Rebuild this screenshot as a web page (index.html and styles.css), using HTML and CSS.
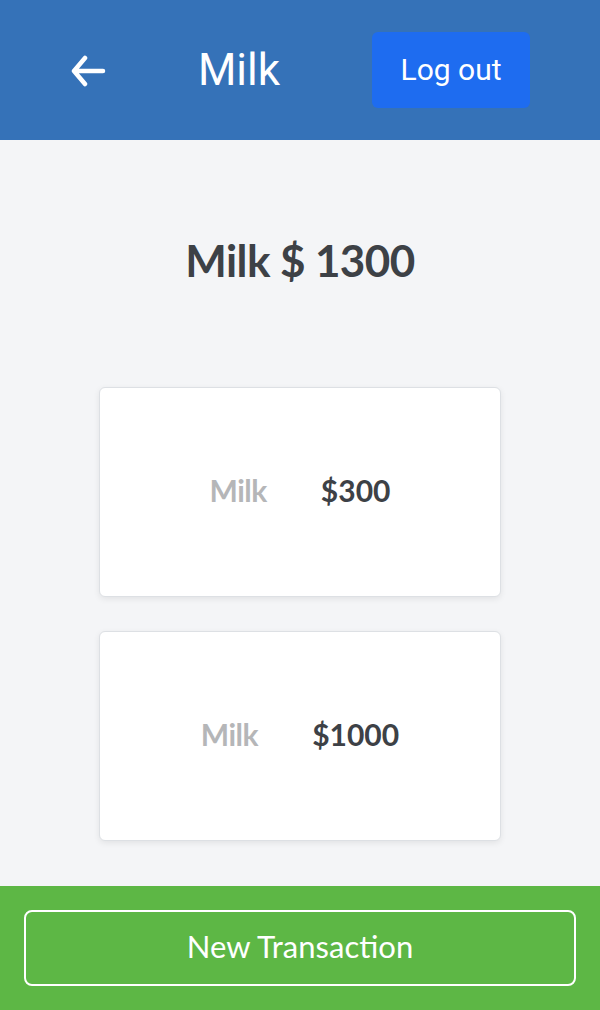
FILE: index.html
```html
<!DOCTYPE html>
<html>
<head>
<meta charset="utf-8">
<link rel="stylesheet" href="styles.css">
</head>
<body>
<div class="app">
  <header class="topbar">
    <button class="back" aria-label="Back">
      <svg width="36" height="32" viewBox="0 0 36 32"><path d="M33 16H4M15 3L4 16l11 13" fill="none" stroke="#fff" stroke-width="4.5" stroke-linecap="round" stroke-linejoin="round"/></svg>
    </button>
    <h1 class="title">Milk</h1>
    <button class="logout">Log out</button>
  </header>
  <main class="content">
    <h2 class="total">Milk $ 1300</h2>
    <div class="list">
      <div class="card"><span class="name">Milk</span><span class="amount">$300</span></div>
      <div class="card"><span class="name">Milk</span><span class="amount">$1000</span></div>
    </div>
  </main>
  <footer class="footer">
    <button class="new">New Transaction</button>
  </footer>
</div>
</body>
</html>
```
FILE: styles.css
```css
html, body { margin: 0; padding: 0; }
body { font-family: Lato, "Open Sans", sans-serif; background: #f4f5f7; }
.app { display: flex; flex-direction: column; height: 1010px; overflow: hidden; }
.topbar {
  height: 140px; flex: none; background: #3572b8;
  display: flex; align-items: center; justify-content: space-between;
  padding: 0 70px; box-sizing: border-box;
}
.back { background: none; border: 0; padding: 0; width: 36px; height: 32px; display: flex; margin-top: 2px; }
.title { margin: 0; font-family: Roboto, sans-serif; font-weight: 400; font-size: 44px; color: #fff; }
.logout {
  font-family: Roboto, sans-serif; font-size: 30px; color: #fff;
  background: #1e6cf0; border: 0; border-radius: 6px;
  width: 158px; height: 76px; padding: 0 0 2px;
}
.content { flex: 1; min-height: 0; display: flex; flex-direction: column; align-items: center; }
.total { margin: 92px 0 0; font-size: 44px; font-weight: 700; color: #3d4146; line-height: 56px; letter-spacing: -0.6px; }
.list { margin-top: 99px; display: flex; flex-direction: column; gap: 34px; }
.card {
  width: 402px; height: 210px; box-sizing: border-box; padding-bottom: 4px;
  background: #fff; border: 1px solid #dde0e4; border-radius: 6px;
  box-shadow: 0 2px 6px rgba(0,0,0,0.08);
  display: flex; align-items: center; justify-content: center; gap: 54px;
  font-size: 30px; font-weight: 700;
}
.name { color: #b5b6b8; letter-spacing: -0.5px; }
.amount { color: #3d4146; }
.footer { height: 124px; flex: none; background: #5db745; display: flex; align-items: center; justify-content: center; }
.new {
  width: 552px; height: 76px; background: transparent; padding: 0 0 4px;
  border: 2px solid #fff; border-radius: 8px;
  font-family: Lato, sans-serif; font-size: 31px; font-weight: 400; color: #fff;
}
```
